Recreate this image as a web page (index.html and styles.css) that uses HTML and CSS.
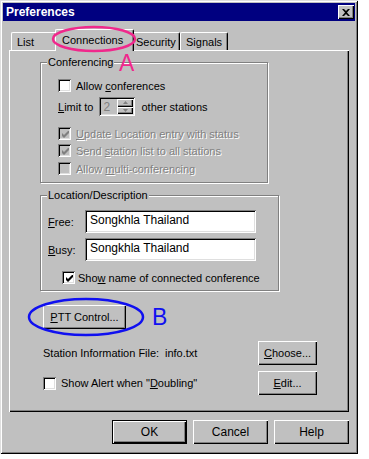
FILE: index.html
```html
<!DOCTYPE html>
<html lang="en">
<head>
    <meta charset="UTF-8">
    <title>Preferences</title>
    <link rel="stylesheet" href="styles.css">
</head>
<body>

<div class="window">
    <!-- Title bar -->
    <div class="titlebar">
        <span class="title">Preferences</span>
        <span class="close">
            <svg width="8" height="7" viewBox="0 0 8 7"><path d="M0 0h2l2 2 2-2h2L5 3.5 8 7H6L4 5 2 7H0l3-3.5z" fill="#000"/></svg>
        </span>
    </div>

    <div class="body">
        <!-- Tabs -->
        <div class="tabs">
            <div class="tab tab-list">List</div>
            <div class="tab tab-conn selected">Connections</div>
            <div class="tab tab-sec">Security</div>
            <div class="tab tab-sig">Signals</div>
        </div>

        <div class="panel">
            <fieldset class="group group-conf">
                <legend>Conferencing</legend>
                <div class="row row-first">
                    <span class="check"></span>
                    <span>Allow <u>c</u>onferences</span>
                </div>
                <div class="row row-limit">
                    <span><u>L</u>imit to</span>
                    <span class="spin">
                        <span class="spin-val">2</span>
                        <span class="spin-btns">
                            <span class="spin-btn"><svg width="5" height="3" viewBox="0 0 5 3"><path d="M2.5 0 5 3H0z" fill="#808080"/></svg></span>
                            <span class="spin-btn"><svg width="5" height="3" viewBox="0 0 5 3"><path d="M0 0h5L2.5 3z" fill="#808080"/></svg></span>
                        </span>
                    </span>
                    <span>other stations</span>
                </div>
                <div class="row disabled row-update">
                    <span class="check checked"><svg width="7" height="7" viewBox="0 0 7 7"><path d="M0 2v3l2 2 5-5V-1L2 4z" fill="#808080"/></svg></span>
                    <span><u>U</u>pdate Location entry with status</span>
                </div>
                <div class="row disabled">
                    <span class="check checked"><svg width="7" height="7" viewBox="0 0 7 7"><path d="M0 2v3l2 2 5-5V-1L2 4z" fill="#808080"/></svg></span>
                    <span>Send <u>s</u>tation list to all stations</span>
                </div>
                <div class="row disabled row-multi">
                    <span class="check"></span>
                    <span>Allow <u>m</u>ulti-conferencing</span>
                </div>
            </fieldset>

            <fieldset class="group group-loc">
                <legend>Location/Description</legend>
                <div class="field field-free">
                    <label><u>F</u>ree:</label>
                    <span class="edit">Songkhla Thailand</span>
                </div>
                <div class="field field-busy">
                    <label><u>B</u>usy:</label>
                    <span class="edit">Songkhla Thailand</span>
                </div>
                <div class="row row-show">
                    <span class="check on"><svg width="7" height="7" viewBox="0 0 7 7"><path d="M0 2v3l2 2 5-5V-1L2 4z" fill="#000"/></svg></span>
                    <span>Sho<u>w</u> name of connected conference</span>
                </div>
            </fieldset>

            <button class="btn btn-ptt"><u>P</u>TT Control...</button>

            <div class="line line-station">
                <span class="station-label">Station Information File:</span>
                <span>info.txt</span>
                <button class="btn btn-side"><u>C</u>hoose...</button>
            </div>
            <div class="line line-alert">
                <span class="check"></span>
                <span class="alert-text">Show Alert when "<u>D</u>oubling"</span>
                <button class="btn btn-side"><u>E</u>dit...</button>
            </div>
        </div>

        <!-- Dialog buttons -->
        <div class="actions">
            <button class="btn btn-action default">OK</button>
            <button class="btn btn-action">Cancel</button>
            <button class="btn btn-action">Help</button>
        </div>
    </div>

    <!-- Annotations drawn over the dialog -->
    <svg class="mark mark-a" width="86" height="28" viewBox="0 0 86 28"><ellipse cx="43" cy="14" rx="41" ry="12" fill="none" stroke="#f0288c" stroke-width="2.5"/></svg>
    <span class="letter letter-a">A</span>
    <svg class="mark mark-b" width="118" height="40" viewBox="0 0 118 40"><ellipse cx="59" cy="20" rx="57" ry="18" fill="none" stroke="#1010f0" stroke-width="2.5"/></svg>
    <span class="letter letter-b">B</span>
</div>

</body>
</html>
```

FILE: styles.css
```css
body {
    margin: 0;
    background-color: #fff;
    font-family: "Liberation Sans", Arial, sans-serif;
    font-size: 11px;
    color: #000;
}
u {
    text-decoration-thickness: 1px;
    text-underline-offset: 1px;
}
.window {
    position: relative;
    width: 358px;
    height: 454px;
    box-sizing: border-box;
    padding: 3px;
    background-color: #c0c0c0;
    box-shadow: inset 1px 1px #dfdfdf, inset -1px -1px #000, inset 2px 2px #fff, inset -2px -2px #808080;
}
.titlebar {
    height: 18px;
    background-color: #000080;
    color: #fff;
    display: flex;
    align-items: center;
    justify-content: space-between;
    padding: 0 1px 0 3px;
}
.title {
    font-weight: bold;
    font-size: 12px;
}
.close {
    width: 16px;
    height: 14px;
    box-sizing: border-box;
    background-color: #c0c0c0;
    display: flex;
    align-items: center;
    justify-content: center;
    box-shadow: inset 1px 1px #fff, inset -1px -1px #000, inset -2px -2px #808080;
}
.body {
    padding: 0 6px;
}

/* Tabs */
.tabs {
    height: 29px;
    display: flex;
    align-items: flex-end;
    padding-left: 2px;
}
.tab {
    position: relative;
    height: 18px;
    box-sizing: border-box;
    display: flex;
    align-items: center;
    padding-left: 5px;
    padding-top: 1px;
    border-left: 1px solid #fff;
    border-top: 1px solid #fff;
    border-right: 1px solid #000;
    border-radius: 2px 2px 0 0;
    box-shadow: inset -1px 0 #808080;
}
.tab-list { width: 46px; }
.tab-conn { width: 75px; }
.tab-sec { width: 48px; padding-left: 3px; }
.tab-sig { width: 48px; }
.tab.selected {
    height: 22px;
    width: 79px;
    margin: 0 -2px -1px;
    padding-left: 6px;
    padding-top: 0;
    padding-bottom: 2px;
    background-color: #c0c0c0;
    z-index: 1;
}

/* Page panel */
.panel {
    width: 340px;
    height: 362px;
    box-sizing: border-box;
    padding: 6px 32px 0 31px;
    box-shadow: inset 1px 1px #fff, inset -1px -1px #000, inset -2px -2px #808080;
}
.group {
    margin: 0;
    border: 1px solid #808080;
    box-shadow: inset 1px 1px #fff, 1px 1px #fff;
}
.group legend {
    padding: 0 1px;
    line-height: 13px;
    background-color: #c0c0c0;
}
.group-conf {
    width: 228px;
    box-sizing: border-box;
    padding: 8px 0 5px 17px;
}
.group-conf legend {
    margin-left: -11px;
}
.group-loc {
    width: 239px;
    box-sizing: border-box;
    margin-top: 6px;
    padding: 8px 0 4px 7px;
}
.group-loc legend {
    margin-left: -1px;
}
.row {
    display: flex;
    align-items: center;
    gap: 5px;
    height: 17px;
}
.row-limit {
    height: 21px;
    margin-top: 2px;
    gap: 6px;
}
.row-update { margin-top: 8px; }
.row-multi { margin-top: 1px; }
.row-show {
    margin-top: 8px;
    padding-left: 14px;
    gap: 3px;
}
.disabled {
    color: #808080;
    text-shadow: 1px 1px 0 #fff;
}

/* Checkbox */
.check {
    width: 13px;
    height: 13px;
    flex: none;
    box-sizing: border-box;
    background-color: #fff;
    display: flex;
    align-items: center;
    justify-content: center;
    box-shadow: inset 1px 1px #808080, inset -1px -1px #fff, inset 2px 2px #000, inset -2px -2px #dfdfdf;
}
.disabled .check {
    background-color: #c0c0c0;
}
.check svg {
    margin: 1px 0 0 1px;
}

/* Spin box */
.spin {
    width: 36px;
    height: 19px;
    box-sizing: border-box;
    padding: 2px;
    display: flex;
    box-shadow: inset 1px 1px #808080, inset -1px -1px #fff, inset 2px 2px #000, inset -2px -2px #dfdfdf;
}
.spin-val {
    flex: 1;
    padding: 1px 0 0 2px;
    font-size: 12px;
    color: #808080;
}
.spin-btns {
    width: 16px;
    display: flex;
    flex-direction: column;
}
.spin-btn {
    flex: 1;
    display: flex;
    align-items: center;
    justify-content: center;
    box-shadow: inset 1px 1px #fff, inset -1px -1px #000, inset -2px -2px #808080;
}

/* Edit fields */
.field {
    display: flex;
    align-items: center;
}
.field label {
    width: 37px;
}
.field-busy { margin-top: 5px; }
.edit {
    width: 171px;
    height: 23px;
    box-sizing: border-box;
    padding: 3px 0 0 5px;
    background-color: #fff;
    font-size: 12px;
    box-shadow: inset 1px 1px #808080, inset -1px -1px #fff, inset 2px 2px #000, inset -2px -2px #dfdfdf;
}

/* Buttons */
.btn {
    font-family: inherit;
    font-size: 11px;
    color: #000;
    background-color: #c0c0c0;
    border: none;
    padding: 0;
    box-sizing: border-box;
    box-shadow: inset 1px 1px #fff, inset -1px -1px #000, inset -2px -2px #808080;
}
.btn-ptt {
    display: block;
    width: 83px;
    height: 24px;
    margin: 14px 0 0 3px;
}
.line {
    display: flex;
    align-items: center;
    padding-left: 3px;
}
.line-station { margin-top: 12px; }
.line-alert { margin-top: 6px; }
.station-label {
    width: 122px;
}
.alert-text {
    margin-left: 5px;
}
.btn-side {
    width: 59px;
    height: 24px;
    margin-left: auto;
}
.actions {
    width: 340px;
    display: flex;
    justify-content: flex-end;
    gap: 6px;
    margin-top: 8px;
}
.btn-action {
    width: 75px;
    height: 24px;
    font-size: 12px;
}
.btn-action.default {
    border: 1px solid #000;
    box-shadow: inset 1px 1px #fff, inset -1px -1px #000, inset -2px -2px #808080;
}

/* Annotations */
.mark {
    position: absolute;
    z-index: 2;
    pointer-events: none;
}
.mark-a {
    left: 51px;
    top: 25px;
}
.mark-b {
    left: 27px;
    top: 297px;
}
.letter {
    position: absolute;
    z-index: 2;
    font-size: 23px;
    line-height: 23px;
}
.letter-a {
    left: 119px;
    top: 52px;
    color: #f0288c;
}
.letter-b {
    left: 152px;
    top: 306px;
    color: #1010f0;
}
```
